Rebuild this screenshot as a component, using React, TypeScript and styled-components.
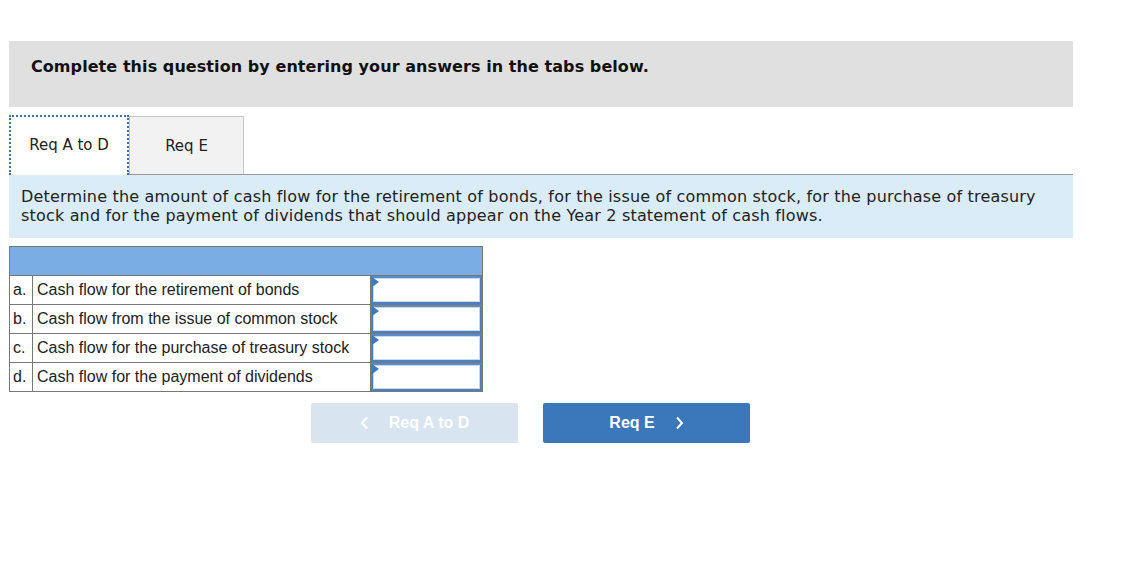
import React from "react";
import styled, { createGlobalStyle } from "styled-components";

const GlobalStyle = createGlobalStyle`
  body { margin: 0; background: #fff; }
`;

const Page = styled.div`
  width: 1064px;
  padding: 41px 0 0 9px;
`;

const Banner = styled.div`
  height: 66px;
  background: #e0e0e0;
  padding: 16px 0 0 22px;
  line-height: 19px;
  font-family: "DejaVu Sans", Verdana, sans-serif;
  font-weight: bold;
  font-size: 16px;
  letter-spacing: 0.07px;
  color: #111;
  box-sizing: border-box;
`;

const TabBar = styled.div`
  display: flex;
  align-items: flex-end;
  margin-top: 8px;
  height: 59px;
  border-bottom: 1px solid #999;
`;

const Tab = styled.div<{ $active?: boolean }>`
  box-sizing: border-box;
  height: ${(p) => (p.$active ? "60px" : "58px")};
  width: ${(p) => (p.$active ? "120px" : "115px")};
  display: flex;
  align-items: center;
  justify-content: center;
  font-family: "DejaVu Sans", Verdana, sans-serif;
  font-size: 15px;
  color: #222;
  background: ${(p) => (p.$active ? "#fff" : "#f2f2f2")};
  border: ${(p) => (p.$active ? "2px dotted #3a6fb5" : "1px solid #c8c8c8")};
  border-bottom: ${(p) => (p.$active ? "none" : "0")};
  margin-bottom: ${(p) => (p.$active ? "-1px" : "0")};
  padding-bottom: ${(p) => (p.$active ? "2px" : "0")};
`;

const Prompt = styled.div`
  background: #dbecf9;
  padding: 12px 12px 13px 12px;
  font-family: "DejaVu Sans", Verdana, sans-serif;
  font-size: 16px;
  letter-spacing: 0.18px;
  line-height: 19px;
  color: #222;
`;

const Table = styled.table`
  margin-top: 8px;
  border-collapse: collapse;
  width: 474px;
  font-family: "Liberation Sans", Arial, sans-serif;
  font-size: 16px;
  color: #222;
`;

const HeadRow = styled.tr`
  height: 29px;
  background: #7aade4;
  td { border: 1px solid #777; }
`;

const Row = styled.tr`
  height: 29px;
`;

const Letter = styled.td`
  border: 1px solid #777;
  width: 23px;
  padding: 0 0 0 3px;
  box-sizing: border-box;
`;

const Label = styled.td`
  border: 1px solid #777;
  padding: 0 4px;
  width: 338px;
  box-sizing: border-box;
  white-space: nowrap;
`;

const InputCell = styled.td`
  border: 1px solid #777;
  padding: 0;
  position: relative;
  background: #fff;
`;

const AnswerBox = styled.input`
  display: block;
  box-sizing: border-box;
  width: 100%;
  height: 28px;
  border: 2px solid #4f7fbf;
  border-top-color: #5b8bc9;
  outline: 1px solid #c8d9ef;
  outline-offset: -3px;
  background: #fff;
`;

const Marker = styled.span`
  position: absolute;
  left: 1px;
  top: 1px;
  width: 0;
  height: 0;
  border-top: 5px solid transparent;
  border-bottom: 5px solid transparent;
  border-left: 7px solid #3d78c2;
`;

const NavRow = styled.div`
  display: flex;
  gap: 25px;
  margin-top: 11px;
  padding-left: 302px;
`;

const NavButton = styled.button<{ $disabled?: boolean }>`
  width: 207px;
  height: 40px;
  border: none;
  border-radius: 2px;
  background: ${(p) => (p.$disabled ? "#d9e4f1" : "#3a77bb")};
  color: #fff;
  font-family: "Liberation Sans", Arial, sans-serif;
  font-weight: bold;
  font-size: 16px;
  display: flex;
  align-items: center;
  justify-content: center;
  gap: 20px;
  cursor: ${(p) => (p.$disabled ? "default" : "pointer")};
`;

const Chevron = ({ dir }: { dir: "left" | "right" }) => (
  <svg width="9" height="14" viewBox="0 0 9 14">
    <path
      d={dir === "left" ? "M7 1.5 L2 7 L7 12.5" : "M2 1.5 L7 7 L2 12.5"}
      fill="none"
      stroke="#fff"
      strokeWidth="2"
    />
  </svg>
);

const rows = [
  ["a.", "Cash flow for the retirement of bonds"],
  ["b.", "Cash flow from the issue of common stock"],
  ["c.", "Cash flow for the purchase of treasury stock"],
  ["d.", "Cash flow for the payment of dividends"],
];

export default function App() {
  return (
    <>
      <GlobalStyle />
      <Page>
        <Banner>Complete this question by entering your answers in the tabs below.</Banner>
        <TabBar>
          <Tab $active>Req A to D</Tab>
          <Tab>Req E</Tab>
        </TabBar>
        <Prompt>
          Determine the amount of cash flow for the retirement of bonds, for the issue of common stock, for the purchase of treasury
          stock and for the payment of dividends that should appear on the Year 2 statement of cash flows.
        </Prompt>
        <Table>
          <tbody>
            <HeadRow>
              <td colSpan={3}></td>
            </HeadRow>
            {rows.map(([l, t]) => (
              <Row key={l}>
                <Letter>{l}</Letter>
                <Label>{t}</Label>
                <InputCell>
                  <AnswerBox />
                  <Marker />
                </InputCell>
              </Row>
            ))}
          </tbody>
        </Table>
        <NavRow>
          <NavButton $disabled>
            <Chevron dir="left" />
            Req A to D
          </NavButton>
          <NavButton>
            Req E
            <Chevron dir="right" />
          </NavButton>
        </NavRow>
      </Page>
    </>
  );
}
